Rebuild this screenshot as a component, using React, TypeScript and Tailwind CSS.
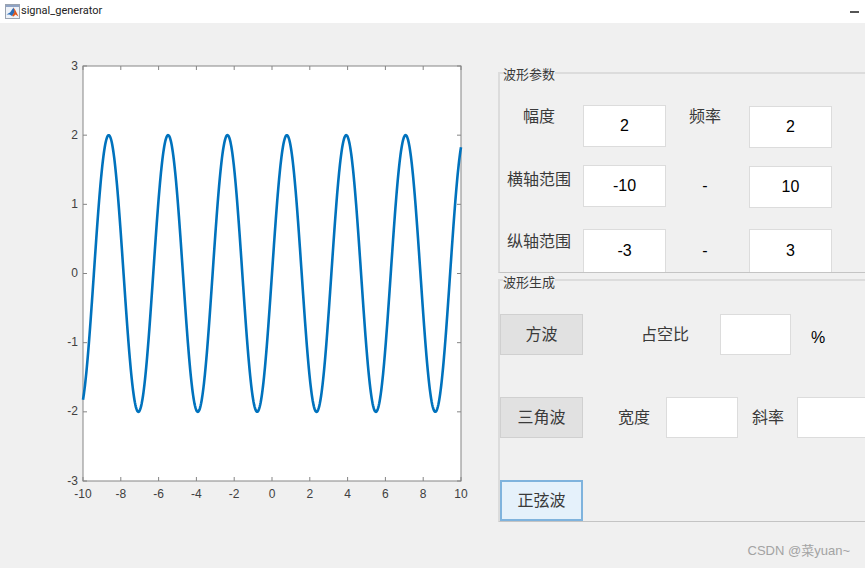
import React from "react";

const cjk = "font-['Noto_Sans_CJK_SC',sans-serif] text-[16px] text-[#3a3a3a]";
const num = "font-['Liberation_Sans',Arial,sans-serif] text-[16px] text-black";

const xTicks = [-10, -8, -6, -4, -2, 0, 2, 4, 6, 8, 10];
const yTicks = [-3, -2, -1, 0, 1, 2, 3];

// plot area in page coordinates
const L = 83;
const R = 461;
const T = 66;
const B = 481;
const px = (x: number) => L + ((x + 10) / 20) * (R - L);
const py = (y: number) => B - ((y + 3) / 6) * (B - T);

function sinePath() {
  const pts: string[] = [];
  for (let i = 0; i <= 800; i++) {
    const x = -10 + (i / 800) * 20;
    pts.push(`${px(x).toFixed(2)},${py(2 * Math.sin(2 * x)).toFixed(2)}`);
  }
  return "M" + pts.join("L");
}

function Chart() {
  return (
    <svg viewBox="0 23 499 545" className="h-[545px] w-[499px] shrink-0">
      <rect x={L} y={T} width={R - L} height={B - T} fill="#fff" stroke="#858585" strokeWidth="1" />
      {xTicks.map((t) => (
        <g key={t}>
          <path d={`M${px(t)} ${B}v-4M${px(t)} ${T}v4`} stroke="#858585" strokeWidth="1" />
          <text x={px(t)} y={497.5} textAnchor="middle" fontSize="12" fill="#404040" fontFamily="'Liberation Sans', Arial, sans-serif">
            {t}
          </text>
        </g>
      ))}
      {yTicks.map((t) => (
        <g key={t}>
          <path d={`M${L} ${py(t)}h4M${R} ${py(t)}h-4`} stroke="#858585" strokeWidth="1" />
          <text x={78} y={py(t) + 3.5} textAnchor="end" fontSize="12" fill="#404040" fontFamily="'Liberation Sans', Arial, sans-serif">
            {t}
          </text>
        </g>
      ))}
      <path d={sinePath()} fill="none" stroke="#0072bd" strokeWidth="2.6" />
    </svg>
  );
}

function Field({ value, className = "" }: { value?: string; className?: string }) {
  return (
    <div className={`flex items-center justify-center border border-[#dcdcdc] bg-white ${num} ${className}`}>
      {value}
    </div>
  );
}

function MatlabIcon() {
  return (
    <svg viewBox="0 0 15 15" className="h-[15px] w-[15px] shrink-0">
      <rect x="0.5" y="0.5" width="14" height="14" fill="#eef2f8" stroke="#9aa3b0" />
      <rect x="1" y="1" width="13" height="2" fill="#8fa3c4" />
      <path d="M1.5 10.5L5 8.5 8.5 3.5 10 8 7 12 4.5 10.5z" fill="#2a6db8" />
      <path d="M8.5 3.5L10.5 6.5 13.5 12.5 10.5 10.5 8.5 12.5 7 12 9.5 8z" fill="#e0561a" />
    </svg>
  );
}

export default function App() {
  return (
    <div className="flex h-[568px] w-[865px] flex-col overflow-hidden bg-[#f0f0f0]">
      <div className="flex h-[23px] shrink-0 items-center bg-white pl-[5px] pr-[6px]">
        <MatlabIcon />
        <span className="ml-[1px] font-['Roboto',sans-serif] text-[11px] text-[#222]">signal_generator</span>
        <div className="ml-auto h-[2px] w-[9px] bg-[#555]" />
      </div>

      <div className="flex min-h-0 flex-1">
        <Chart />

        <div className="relative -ml-[1px] flex w-[420px] shrink-0 flex-col pt-[43px]">
          <fieldset className="h-[207px] border-t-2 border-b border-l-2 border-t-[#dcdcdc] border-b-[#c4c4c4] border-l-[#dcdcdc]">
            <legend className="relative top-[1px] ml-[3px] font-['Noto_Sans_CJK_SC',sans-serif] text-[13px] leading-[14px] text-[#3a3a3a]">波形参数</legend>
            <div className="grid grid-cols-[83px_83px_83px_83px] pt-[25px]">
              <div className={`pr-[5px] text-center leading-[20px] ${cjk}`}>幅度</div>
              <Field value="2" className="h-[42px]" />
              <div className={`pr-[5px] text-center leading-[20px] ${cjk}`}>频率</div>
              <Field value="2" className="mt-px h-[42px]" />

              <div className={`mt-[20px] pr-[5px] text-center leading-[20px] ${cjk}`}>横轴范围</div>
              <Field value="-10" className="mt-[17px] h-[42px]" />
              <div className={`mt-[17px] flex h-[42px] items-center justify-center pr-[5px] ${num}`}>-</div>
              <Field value="10" className="mt-[18px] h-[42px]" />

              <div className={`mt-[22px] pr-[5px] text-center leading-[20px] ${cjk}`}>纵轴范围</div>
              <Field value="-3" className="mt-[21px] h-[43px] border-b-0" />
              <div className={`mt-[21px] flex h-[43px] items-center justify-center pr-[5px] ${num}`}>-</div>
              <Field value="3" className="mt-[21px] h-[43px] border-b-0" />
            </div>
          </fieldset>

          <fieldset className="h-[249px] border-t-2 border-b border-l-2 border-t-[#dcdcdc] border-b-[#c4c4c4] border-l-[#dcdcdc]">
            <legend className="relative top-[2px] ml-[3px] font-['Noto_Sans_CJK_SC',sans-serif] text-[13px] leading-[14px] text-[#3a3a3a]">波形生成</legend>
            <div className="flex flex-col gap-[42px] pt-[27px]">
              <div className="flex h-[41px] items-center">
                <button className={`h-full w-[83px] shrink-0 border border-[#d0d0d0] bg-[#e1e1e1] pb-[4px] ${cjk}`}>方波</button>
                <span className={`mb-[4px] ml-[58px] ${cjk}`}>占空比</span>
                <Field className="ml-[31px] h-full w-[71px]" />
                <span className={`ml-[20px] mt-[7px] ${num}`}>%</span>
              </div>
              <div className="flex h-[41px] items-center">
                <button className={`h-full w-[83px] shrink-0 border border-[#d0d0d0] bg-[#e1e1e1] pb-[4px] ${cjk}`}>三角波</button>
                <span className={`mb-[4px] ml-[35px] ${cjk}`}>宽度</span>
                <Field className="ml-[16px] h-full w-[72px] shrink-0" />
                <span className={`mb-[3px] ml-[14px] ${cjk}`}>斜率</span>
                <Field className="ml-[13px] h-full w-[72px] shrink-0" />
              </div>
              <div className="flex h-[41px] items-center">
                <button className={`h-full w-[83px] shrink-0 border-2 border-[#7fb3dd] bg-[#e5f1fb] pb-[4px] ${cjk}`}>正弦波</button>
              </div>
            </div>
          </fieldset>

          <div className="pr-[68px] pt-[20px] text-right font-['Liberation_Sans','Noto_Sans_CJK_SC',sans-serif] text-[13px] leading-[18px] text-[#a3a3a3]">
            CSDN @菜yuan~
          </div>
        </div>
      </div>
    </div>
  );
}
